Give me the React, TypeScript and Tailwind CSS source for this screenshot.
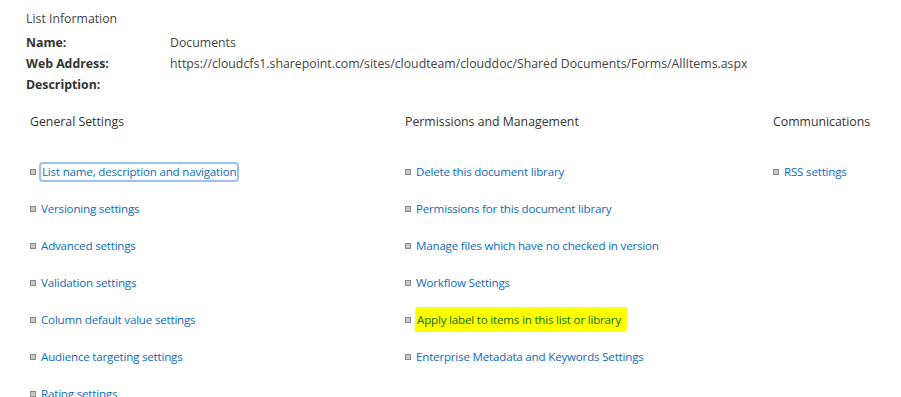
import React from "react";

const col1 = [
  "List name, description and navigation",
  "Versioning settings",
  "Advanced settings",
  "Validation settings",
  "Column default value settings",
  "Audience targeting settings",
  "Rating settings",
];
const col2 = [
  "Delete this document library",
  "Permissions for this document library",
  "Manage files which have no checked in version",
  "Workflow Settings",
  "Apply label to items in this list or library",
  "Enterprise Metadata and Keywords Settings",
];
const col3 = ["RSS settings"];

function Bullet() {
  return <span className="inline-block w-[6px] h-[6px] bg-[#c8c8c8] border border-[#8a8a8a] shrink-0" />;
}

function LinkRow({ text, focused, highlight }: { text: string; focused?: boolean; highlight?: boolean }) {
  return (
    <div className="h-[37px] flex items-center gap-[5px] text-[11.6px] tracking-[-0.2px]">
      <Bullet />
      {highlight ? (
        <span className="relative px-[1px]">
          <span className="absolute left-[-1px] right-[-5px] top-[-4px] bottom-[-4px] bg-[#ffff00] rounded-[2px] -skew-x-2" />
          <span className="relative text-[#0b7000]">{text}</span>
        </span>
      ) : focused ? (
        <span className="text-[#0f6cbd] outline outline-2 outline-[#9cc0f3] rounded-[2px] px-[1px] leading-[16px]">{text}</span>
      ) : (
        <span className="text-[#0f6cbd]">{text}</span>
      )}
    </div>
  );
}

export default function App() {
  return (
    <div
      className="w-[901px] h-[397px] overflow-hidden bg-white text-[12.3px] text-[#444]"
      style={{ fontFamily: '"Segoe UI", "Open Sans", "Noto Sans", sans-serif' }}
    >
      <div className="pl-[26px] pt-[9px]">
        <div className="h-[20px] leading-[20px] text-[#444]">List Information</div>
        <div className="mt-[3px] grid grid-cols-[144px_1fr] auto-rows-[21px] leading-[21px]">
          <div className="font-bold text-[#333]">Name:</div>
          <div>Documents</div>
          <div className="font-bold text-[#333]">Web Address:</div>
          <div>https://cloudcfs1.sharepoint.com/sites/cloudteam/clouddoc/Shared Documents/Forms/AllItems.aspx</div>
          <div className="font-bold text-[#333]">Description:</div>
          <div></div>
        </div>
      </div>
      <div className="pl-[30px] mt-[17px] grid grid-cols-[375px_368px_1fr]">
        <div>
          <div className="h-[20px] leading-[20px] text-[#333]">General Settings</div>
          <div className="mt-[21px]">
            {col1.map((t, i) => (
              <LinkRow key={t} text={t} focused={i === 0} />
            ))}
          </div>
        </div>
        <div>
          <div className="h-[20px] leading-[20px] text-[#333]">Permissions and Management</div>
          <div className="mt-[21px]">
            {col2.map((t, i) => (
              <LinkRow key={t} text={t} highlight={i === 4} />
            ))}
          </div>
        </div>
        <div>
          <div className="h-[20px] leading-[20px] text-[#333]">Communications</div>
          <div className="mt-[21px]">
            {col3.map((t) => (
              <LinkRow key={t} text={t} />
            ))}
          </div>
        </div>
      </div>
    </div>
  );
}
